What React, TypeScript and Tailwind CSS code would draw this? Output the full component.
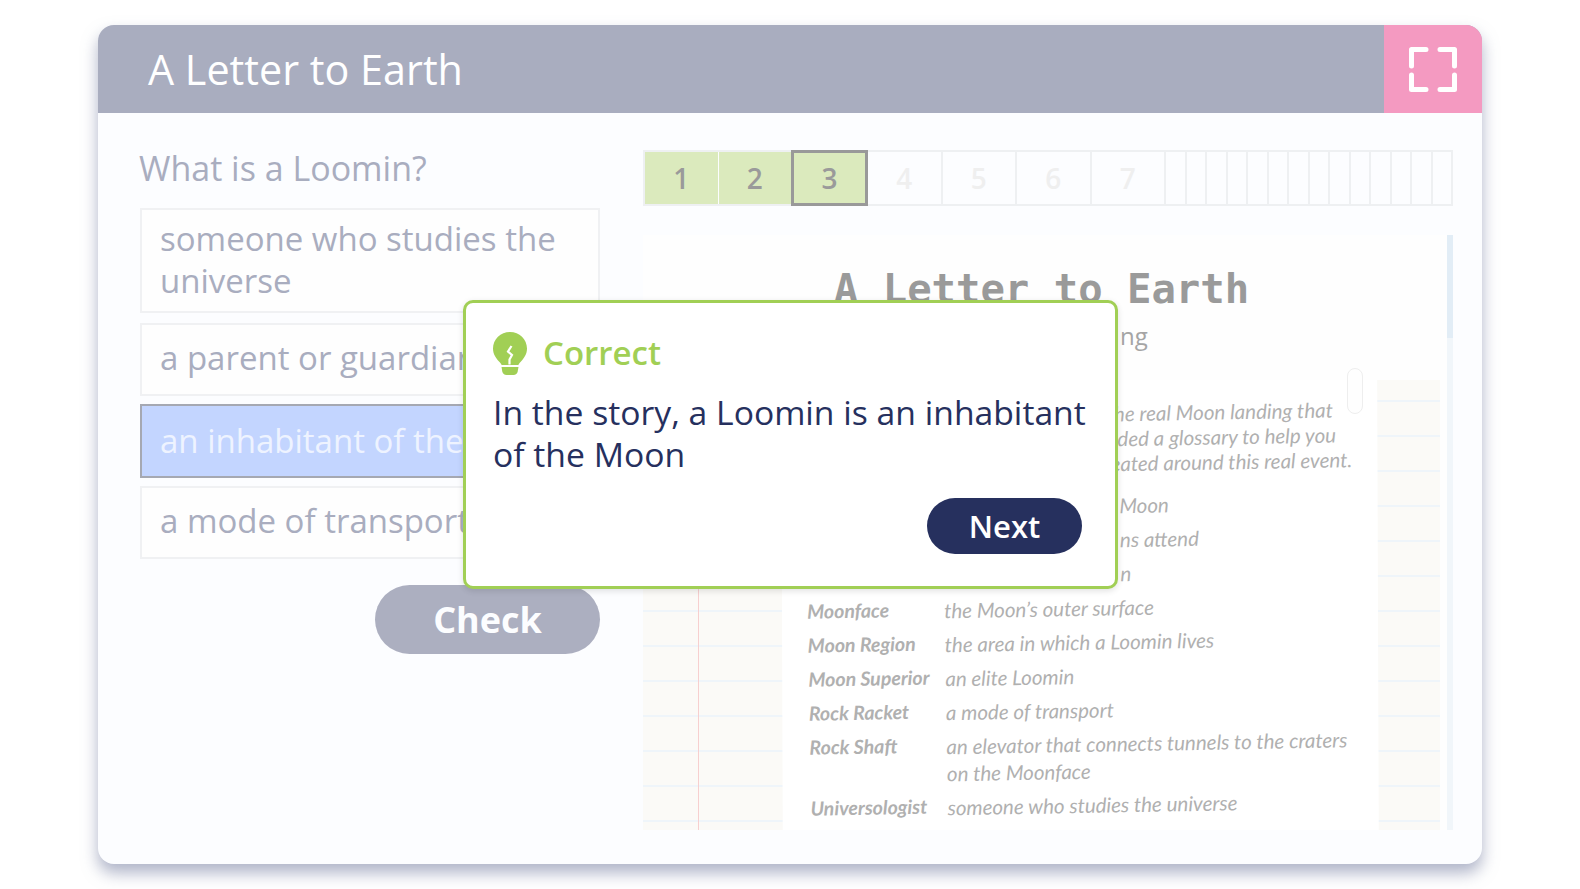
const steps = [
  { n: "1", state: "done" },
  { n: "2", state: "done" },
  { n: "3", state: "current" },
  { n: "4", state: "todo" },
  { n: "5", state: "todo" },
  { n: "6", state: "todo" },
  { n: "7", state: "todo" },
];

const glossary = [
  { term: "Moonface", def: ["the Moon’s outer surface"] },
  { term: "Moon Region", def: ["the area in which a Loomin lives"] },
  { term: "Moon Superior", def: ["an elite Loomin"] },
  { term: "Rock Racket", def: ["a mode of transport"] },
  { term: "Rock Shaft", def: ["an elevator that connects tunnels to the craters", "on the Moonface"] },
  { term: "Universologist", def: ["someone who studies the universe"] },
];

const Bulb = () => (
  <svg width="34" height="43" viewBox="0 0 34 43" className="shrink-0">
    <path d="M17 0C7.600 0 0 7.400 0 16.500c0 5.600 2.900 9.600 6 13 1.500 1.600 2.300 2.600 2.600 3.500h16.800c.3-.9 1.100-1.900 2.600-3.500 3.100-3.400 6-7.400 6-13C34 7.400 26.400 0 17 0z" fill="#a1cf55" />
    <path d="M8.500 35h17l-.8 4.500c-.4 2-2 3.500-4.200 3.500h-7c-2.200 0-3.800-1.500-4.200-3.500z" fill="#a1cf55" />
    <path d="M18.500 14l-3.500 5.500 4 3.500-2.500 4.500v5" fill="none" stroke="#fff" strokeWidth="2.200" />
  </svg>
);

const Expand = () => (
  <svg width="48" height="45" viewBox="0 0 48 45" fill="none" stroke="#fff" strokeWidth="5" strokeLinecap="round" strokeLinejoin="round">
    <path d="M2.500 19V2.500H17" />
    <path d="M31 2.500h14.500V19" />
    <path d="M2.500 28v14.500H17" />
    <path d="M31 42.500h14.500V28" />
  </svg>
);

const App = () => {
  return (
    <div className="w-[1580px] h-[889px] bg-white pt-[25px] pl-[98px] font-['Open_Sans',sans-serif] overflow-hidden">
      <div className="relative w-[1384px] h-[839px] rounded-[16px] bg-[#fcfdff] shadow-[0_9px_16px_rgba(110,118,155,0.55)]">
        <header className="flex h-[88px] items-stretch justify-between overflow-hidden rounded-t-[16px] bg-[#a9adbf]">
          <h1 className="pl-[50px] text-[41.300px] leading-[88px] text-white">A Letter to Earth</h1>
          <div className="flex w-[98px] items-center justify-center bg-[#f49ac1]">
            <Expand />
          </div>
        </header>

        <div className="flex pt-[35px] pl-[42px] pr-[29px]">
          <div className="w-[460px]">
            <h2 className="pb-[20px] text-[34px] leading-[40px] -ml-[1px] text-[#a9adbf]">What is a Loomin?</h2>
            <div className="flex flex-col gap-[8px] text-[33px] leading-[42px] text-[#a9adbf]">
              <div className="mb-[2px] border-2 border-[#f0f1f3] bg-[#fefefe] pl-[18px] pr-[19px] pt-[7.500px] pb-[9.500px]">
                someone who studies the universe
              </div>
              <div className="border-2 border-[#f0f1f3] bg-[#fefefe] pl-[18px] pt-[12px] pb-[15px] whitespace-nowrap">
                a parent or guardian
              </div>
              <div className="border-2 border-[#a5a8b2] bg-[#c3d5ff] pl-[18px] py-[14px] text-[#eef3ff] whitespace-nowrap overflow-hidden">
                an inhabitant of the Moon
              </div>
              <div className="border-2 border-[#f0f1f3] bg-[#fefefe] pl-[18px] pt-[12px] pb-[15px] whitespace-nowrap">
                a mode of transport
              </div>
            </div>
            <div className="flex justify-end pt-[26px]">
              <button className="h-[69px] w-[225px] rounded-full bg-[#acafc0] text-[36px] font-bold text-[#fcfdff]">
                Check
              </button>
            </div>
          </div>

          <div className="ml-[43px] w-[810px] pt-[2px]">
            <div className="flex h-[56px] border-2 border-[#eef0f2]">
              {steps.map((s) => (
                <div
                  key={s.n}
                  className={
                    s.state === "current"
                      ? "relative z-10 -my-[2px] -ml-[1px] flex w-[77px] items-center justify-center border-[3px] border-[#999999] bg-[#dbeabd] text-[28px] font-semibold text-[#9a9a9a]"
                      : s.state === "done"
                        ? "flex w-[73.500px] items-center justify-center border-r border-[#fcfdff] bg-[#dbeabd] text-[28px] font-semibold text-[#9a9a9a]"
                        : "flex w-[74.500px] items-center justify-center border-r-2 border-[#eef0f2] text-[28px] font-semibold text-[#efefef]"
                  }
                >
                  {s.n}
                </div>
              ))}
              {Array.from({ length: 14 }).map((_, i) => (
                <div key={i} className="flex-1 border-r-2 border-[#eef0f2] last:border-r-0" />
              ))}
            </div>

            <div className="relative mt-[29px] h-[595px] bg-[#fefefe]">
              <div className="absolute right-0 top-0 h-full w-[6px] bg-[#f1f6fa]">
                <div className="h-[103px] bg-[#e2edf6]" />
              </div>
              <h3 className="pt-[31px] text-center font-['DejaVu_Sans_Mono',monospace] text-[40.600px] font-bold leading-[46px] text-[#9a9a9a] pr-[13px]">
                A Letter to Earth
              </h3>
              <p className="pl-[477px] pt-[9px] text-[24px] leading-[30px] text-[#a5a5a5]">ng</p>

              <div className="mt-[29px] mr-[13px] h-[450px] overflow-hidden bg-[#fbfaf7] bg-[repeating-linear-gradient(180deg,transparent_0,transparent_20px,#eff5fa_20px,#eff5fa_22px,transparent_22px,transparent_35px)]">
                <div className="ml-[139px] mr-[62px] h-[470px] bg-white font-['Lato',sans-serif] italic text-[20.500px] text-[#b0b0b0] [transform:rotate(-0.2deg)]">
                  <div className="[transform:rotate(-0.800deg)] pl-[25px]">
                    <div className="pt-[22px] leading-[25px] whitespace-nowrap">
                      <div className="pl-[303px]">the real Moon landing that</div>
                      <div className="pl-[292px]">added a glossary to help you</div>
                      <div className="pl-[290px]">created around this real event.</div>
                    </div>
                    <div className="pl-[314px] pt-[12px] leading-[34px]">
                      <div>Moon</div>
                      <div>ns attend</div>
                      <div>n</div>
                    </div>
                    <div className="-mt-[1px] flex flex-col">
                      {glossary.map((g) => (
                        <div key={g.term} className="flex leading-[34px]">
                          <div className="w-[137px] shrink-0 text-[19.500px] font-bold">{g.term}</div>
                          <div className="leading-[27px] pt-[5px] pb-[2px]">
                            {g.def.map((d) => (
                              <div key={d}>{d}</div>
                            ))}
                          </div>
                        </div>
                      ))}
                    </div>
                  </div>
                </div>
              </div>
              <div className="absolute left-[55px] top-[145px] h-[450px] w-px bg-[#f7cfcf]" />
              <div className="absolute left-[704px] top-[133px] h-[46px] w-[16px] rounded-full border border-[#eeeeee] bg-[#fefefe]" />
            </div>
          </div>
        </div>

        <div className="absolute left-[365px] top-[275px] flex h-[289px] w-[655px] flex-col rounded-[10px] border-[3px] border-[#a1cf55] bg-white pl-[27px] pr-[20px] pt-[29px] shadow-[0_2px_6px_rgba(0,0,0,0.12)]">
          <div className="flex items-center gap-[16px]">
            <Bulb />
            <span className="-mt-[2px] text-[33px] font-semibold leading-[42px] text-[#a1cf55]">Correct</span>
          </div>
          <p className="mt-[16px] text-[33.700px] leading-[42px] text-[#26305e]">
            In the story, a Loomin is an inhabitant of the Moon
          </p>
          <div className="flex justify-end pr-[13px] pt-[23px]">
            <button className="h-[56px] w-[155px] rounded-full bg-[#26305e] text-[31px] font-semibold text-white">
              Next
            </button>
          </div>
        </div>
      </div>
    </div>
  );
};

export default App;
